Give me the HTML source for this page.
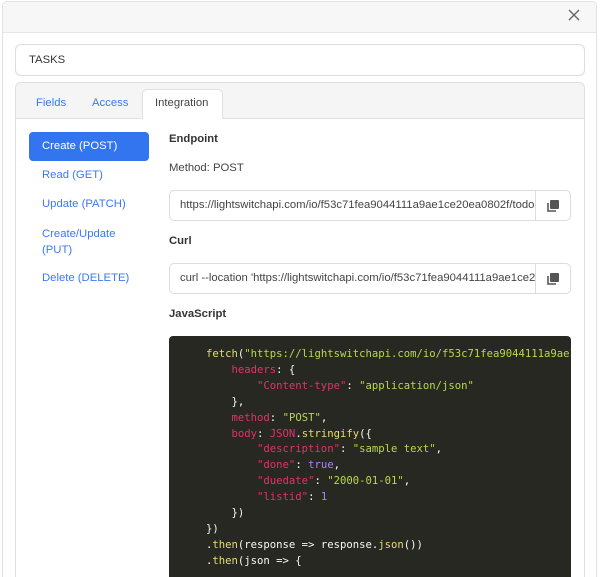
<!DOCTYPE html>
<html style="width:600px;height:577px;overflow:hidden"><head><style>
*{box-sizing:border-box;margin:0;padding:0}
body{width:600px;height:577px;overflow:hidden;background:#fff;font-family:"Liberation Sans",sans-serif;font-size:11.3px;color:#333;position:relative}
.modal{position:absolute;left:2px;top:1px;width:595px;height:600px;border:1px solid #e2e2e2;border-radius:5px;background:#fff;overflow:hidden}
.hdr{height:31px;background:#f7f7f7;border-bottom:1px solid #e6e6e6}
.x{position:absolute;left:567px;top:8px}
.abs{position:absolute}
.inp{position:absolute;border:1px solid #dcdcdc;border-radius:6px;background:#fff}
.blue{color:#3a78f2}
.code{position:absolute;left:169px;top:336px;width:402px;height:260px;background:#272822;border-radius:4px;font-family:"DejaVu Sans Mono","Liberation Mono",monospace;font-size:10.6px;line-height:15.9px;color:#f8f8f2;padding:11px 0 0 37px;white-space:pre;overflow:hidden}
.r{color:#e6306a}.g{color:#b8d94a}.p{color:#ae81ff}.y{color:#e6db74}
.copy{position:absolute;width:35px;border-left:1px solid #dcdcdc;right:0;top:0;bottom:0}
</style></head><body>
<div class="modal"><div class="hdr"></div></div>
<svg class="x" width="14" height="14" viewBox="0 0 14 14"><path d="M2 2L12 12M12 2L2 12" stroke="#666" stroke-width="1.4"/></svg>
<div class="inp" style="left:15px;top:44px;width:570px;height:32px"></div>
<div class="abs" style="left:29px;top:54px;color:#333">TASKS</div>
<div class="abs" style="left:15px;top:82px;width:570px;height:520px;border:1px solid #dedede;border-radius:6px;overflow:hidden">
 <div style="height:36px;background:#f5f5f5;border-bottom:1px solid #e0e0e0"></div>
</div>
<div class="abs" style="left:142px;top:89px;width:81px;height:30px;background:#fff;border:1px solid #e0e0e0;border-bottom:none;border-radius:5px 5px 0 0"></div>
<div class="abs blue" style="left:36px;top:97px">Fields</div>
<div class="abs blue" style="left:92px;top:97px">Access</div>
<div class="abs" style="left:155px;top:97px;color:#444">Integration</div>
<div class="abs" style="left:29px;top:132px;width:120px;height:29px;background:#3275ee;border-radius:4px;color:#fff;padding:8px 0 0 13px">Create (POST)</div>
<div class="abs blue" style="left:42px;top:169px">Read (GET)</div>
<div class="abs blue" style="left:42px;top:198px">Update (PATCH)</div>
<div class="abs blue" style="left:42px;top:226px;line-height:16px">Create/Update<br>(PUT)</div>
<div class="abs blue" style="left:42px;top:272px">Delete (DELETE)</div>
<div class="abs" style="left:169px;top:133px;font-weight:bold;color:#333">Endpoint</div>
<div class="abs" style="left:169px;top:162px;color:#444">Method: POST</div>
<div class="inp" style="left:169px;top:190px;width:402px;height:31px;overflow:hidden;border-radius:5px">
 <div style="position:absolute;left:10px;top:8px;white-space:nowrap;color:#444;width:356px;overflow:hidden">https://lightswitchapi.com/io/f53c71fea9044111a9ae1ce20ea0802f/todos</div>
 <div class="copy"><svg style="position:absolute;left:10px;top:8px" width="14" height="14" viewBox="0 0 14 14"><rect x="4" y="1" width="9" height="9" rx="1" fill="#555"/><path d="M2 4v8h8" fill="none" stroke="#555" stroke-width="1.6"/></svg></div>
</div>
<div class="abs" style="left:169px;top:235px;font-weight:bold;color:#333">Curl</div>
<div class="inp" style="left:169px;top:263px;width:402px;height:31px;overflow:hidden;border-radius:5px">
 <div style="position:absolute;left:10px;top:8px;white-space:nowrap;color:#444;width:356px;overflow:hidden">curl --location 'https://lightswitchapi.com/io/f53c71fea9044111a9ae1ce20ea</div>
 <div class="copy"><svg style="position:absolute;left:10px;top:8px" width="14" height="14" viewBox="0 0 14 14"><rect x="4" y="1" width="9" height="9" rx="1" fill="#555"/><path d="M2 4v8h8" fill="none" stroke="#555" stroke-width="1.6"/></svg></div>
</div>
<div class="abs" style="left:169px;top:308px;font-weight:bold;color:#333">JavaScript</div>
<div class="code"><span class="y">fetch</span>(<span class="g">"https://lightswitchapi.com/io/f53c71fea9044111a9ae1ce20ea0802f/todos"</span>, {
    <span class="r">headers</span>: {
        <span class="r">"Content-type"</span>: <span class="g">"application/json"</span>
    },
    <span class="r">method</span>: <span class="g">"POST"</span>,
    <span class="r">body</span>: <span class="r">JSON</span>.<span class="y">stringify</span>({
        <span class="r">"description"</span>: <span class="g">"sample text"</span>,
        <span class="r">"done"</span>: <span class="p">true</span>,
        <span class="r">"duedate"</span>: <span class="g">"2000-01-01"</span>,
        <span class="r">"listid"</span>: <span class="p">1</span>
    })
})
.<span class="y">then</span>(response =&gt; response.<span class="y">json</span>())
.<span class="y">then</span>(json =&gt; {</div>
</body></html>
